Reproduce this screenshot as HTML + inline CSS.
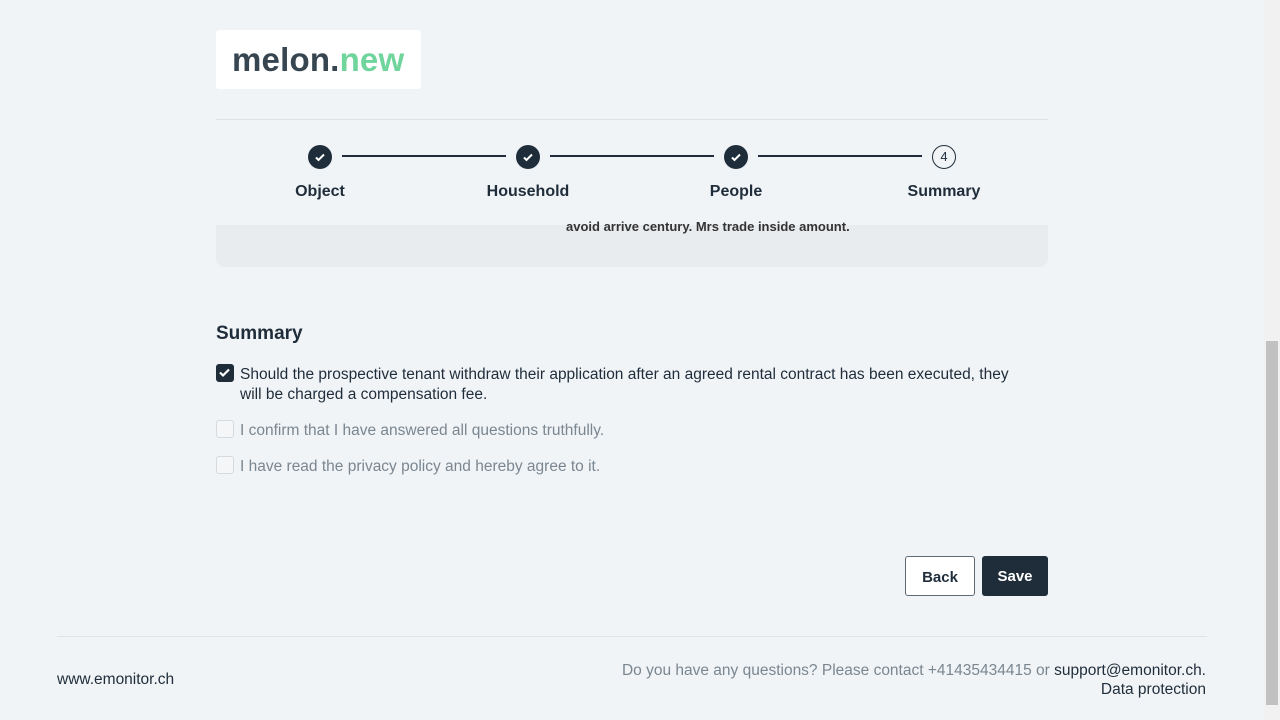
<!DOCTYPE html>
<html><head><meta charset="utf-8"><style>
*{margin:0;padding:0;box-sizing:border-box}
body{width:1280px;height:720px;overflow:hidden;background:#f1f4f7;font-family:"Liberation Sans",sans-serif;color:#1f2d3a;position:relative}
.sb{position:absolute;right:0;top:0;width:16px;height:720px;background:#f1f1f1}
.sb i{position:absolute;left:2px;top:341px;width:12px;height:364px;background:#c1c1c1}
.logo{position:absolute;left:216px;top:30px;width:205px;height:59px;background:#fff;border-radius:3px;font-weight:bold;font-size:33px;color:#36454f;padding:11px 0 0 16px;letter-spacing:0.2px}
.logo span{color:#6fd59c}
.hr{position:absolute;left:216px;top:119px;width:832px;height:1px;background:#dde2e6}
.panel{position:absolute;left:216px;top:225px;width:832px;height:42px;background:#e9ecef;border-radius:0 0 8px 8px}
.panel p{position:absolute;left:350px;top:-6px;font-size:13px;font-weight:bold;color:#333;width:420px;height:15px;overflow:hidden}
.step{position:absolute;top:145px;width:24px;height:24px;border-radius:50%;background:#1f2d3a;color:#fff;text-align:center}
.step svg{margin-top:6px}
.num{background:transparent;border:1.5px solid #1f2d3a;color:#1f2d3a;font-size:13px;line-height:21px}
.line{position:absolute;top:155px;height:2px;width:164px;background:#1f2d3a}
.lbl{position:absolute;top:183px;font-size:16px;font-weight:bold;width:160px;text-align:center}
h2{position:absolute;left:216px;top:323px;font-size:19px}
.cb{position:absolute;left:216px;width:18px;height:18px;border-radius:3px;border:1.5px solid #d5dade;background:#f4f6f8}
.cb.on{background:#1f2d3a;border-color:#1f2d3a}
.t{position:absolute;left:240px;font-size:15.5px;line-height:20px}
.g{color:#7a8690}
.btn{position:absolute;top:556px;height:40px;border-radius:3px;font-size:15px;font-weight:bold;text-align:center;line-height:42px}
.ft{position:absolute;left:57px;top:636px;width:1150px;height:1px;background:#e0e4e8}
.f{position:absolute;font-size:15.5px;color:#1f2d3a}
</style></head><body>
<div class="sb"><i></i></div>
<div class="logo">melon.<span>new</span></div>
<div class="hr"></div>
<div class="panel"><p>avoid arrive century. Mrs trade inside amount.</p></div>
<div class="step" style="left:308px"><svg width="12" height="12" viewBox="0 0 12 12"><path d="M2 6.5l2.5 2.5 5.5-5.5" stroke="#fff" stroke-width="2" fill="none"/></svg></div>
<div class="step" style="left:516px"><svg width="12" height="12" viewBox="0 0 12 12"><path d="M2 6.5l2.5 2.5 5.5-5.5" stroke="#fff" stroke-width="2" fill="none"/></svg></div>
<div class="step" style="left:724px"><svg width="12" height="12" viewBox="0 0 12 12"><path d="M2 6.5l2.5 2.5 5.5-5.5" stroke="#fff" stroke-width="2" fill="none"/></svg></div>
<div class="step num" style="left:932px">4</div>
<div class="line" style="left:342px"></div>
<div class="line" style="left:550px"></div>
<div class="line" style="left:758px"></div>
<div class="lbl" style="left:240px">Object</div>
<div class="lbl" style="left:448px">Household</div>
<div class="lbl" style="left:656px">People</div>
<div class="lbl" style="left:864px">Summary</div>
<h2>Summary</h2>
<div class="cb on" style="top:364px"><svg width="15" height="15" viewBox="0 0 15 15"><path d="M3 7.5l3 3 6-6" stroke="#fff" stroke-width="2.2" fill="none"/></svg></div>
<div class="t" style="top:365px;width:785px">Should the prospective tenant withdraw their application after an agreed rental contract has been executed, they will be charged a compensation fee.</div>
<div class="cb" style="top:420px"></div>
<div class="t g" style="top:421px">I confirm that I have answered all questions truthfully.</div>
<div class="cb" style="top:456px"></div>
<div class="t g" style="top:457px">I have read the privacy policy and hereby agree to it.</div>
<div class="btn" style="left:905px;width:70px;border:1px solid #5d6a74;background:#fff">Back</div>
<div class="btn" style="left:982px;width:66px;background:#1f2d3a;color:#fff">Save</div>
<div class="ft"></div>
<div class="f" style="left:57px;top:671px">www.emonitor.ch</div>
<div class="f" style="right:74px;top:661px;text-align:right;line-height:19px"><span class="g">Do you have any questions? Please contact +41435434415 or </span>support@emonitor.ch.<br>Data protection</div>
</body></html>
